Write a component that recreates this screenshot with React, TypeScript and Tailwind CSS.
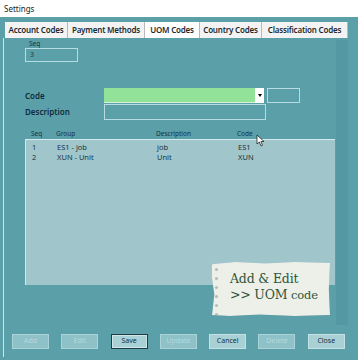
const tabs = [
  { label: 'Account Codes', w: 'w-[63px]' },
  { label: 'Payment Methods', w: 'w-[77px]' },
  { label: 'UOM Codes', w: 'w-[55px]' },
  { label: 'Country Codes', w: 'w-[62px]' },
  { label: 'Classification Codes', w: 'w-[86px]' },
];

const rows = [
  { seq: '1', group: 'ES1 - job', desc: 'job', code: 'ES1' },
  { seq: '2', group: 'XUN - Unit', desc: 'Unit', code: 'XUN' },
];

const buttons = [
  { label: 'Add', enabled: false },
  { label: 'Edit', enabled: false },
  { label: 'Save', enabled: true, active: true },
  { label: 'Update', enabled: false },
  { label: 'Cancel', enabled: true },
  { label: 'Delete', enabled: false },
  { label: 'Close', enabled: true },
];

function Btn({ label, enabled, active }: { label: string; enabled: boolean; active?: boolean }) {
  const base = 'w-[37px] h-[15px] flex items-center justify-center text-[7px]';
  if (!enabled) {
    return <div className={`${base} bg-[#8fc1c8] border border-[#a9d3d8] text-[#b5d9dd]`}>{label}</div>;
  }
  return (
    <div
      className={`${base} bg-[#a9d0d5] text-[#14323f] ${active ? 'border border-[#1f3d48] shadow-[inset_0_0_0_1px_#cfe6e9]' : 'border border-[#c4e2e6]'}`}
    >
      {label}
    </div>
  );
}

function Note() {
  return (
    <div className="absolute left-[212px] top-[262px] w-[118px] h-[54px] bg-[#edefe9] shadow-[0_1px_2px_rgba(0,0,0,0.25)] [clip-path:polygon(0_4%,20%_0,45%_3%,70%_0,100%_2%,99%_50%,100%_98%,70%_100%,40%_97%,15%_100%,0_98%,2%_60%,0_30%)]">
      <div className="absolute left-[3px] top-[6px] flex flex-col gap-[6px]">
        {[0, 1, 2, 3, 4, 5].map((i) => (
          <div key={i} className="w-[3px] h-[3px] rounded-full bg-[#b8bcb4]" />
        ))}
      </div>
      <div className="pl-[18px] pt-[9px] text-[#2f5638] leading-[16px] text-[12.5px] font-['DejaVu_Serif',serif] tracking-[-0.2px] whitespace-nowrap">
        <div>Add &amp; Edit</div>
        <div>&gt;&gt; UOM <span className="text-[11.5px]">code</span></div>
      </div>
    </div>
  );
}

export default function App() {
  return (
    <div className="relative w-[358px] h-[360px] bg-[#5b9fa8] font-['Noto_Sans',sans-serif] overflow-hidden">
      <div className="h-[17px] bg-white text-[8px] text-[#222] pl-[4px] flex items-center">Settings</div>

      <div className="flex pl-[5px] pt-[5px]">
        {tabs.map((t) => (
          <div
            key={t.label}
            className={`${t.w} h-[16px] flex items-center justify-center whitespace-nowrap overflow-hidden text-[8px] font-semibold tracking-[-0.2px] text-[#1e2a30] border-r border-[#b9b9b9] ${t.label === 'UOM Codes' ? 'bg-white' : 'bg-[#f3f3f3]'}`}
          >
            {t.label}
          </div>
        ))}
      </div>

      <div className="absolute left-[336px] top-[40px] w-[12px] h-[285px] bg-[#5398a2]" />

      <div className="relative ml-[3px] mr-[5px] h-[319px] border-l border-[#cbe9ec] pl-[21px] flex flex-col">
        <div className="pl-[4px] pt-[2px] text-[6.5px] text-[#143545] leading-[8px]">Seq</div>
        <div className="w-[53px] h-[14px] border border-[#b7dde2] text-[7px] text-[#1a3a48] pl-[4px] flex items-center">3</div>

        <div className="mt-[26px] flex items-center h-[15px]">
          <div className="w-[79px] text-[8px] font-semibold text-[#0f2c3d]">Code</div>
          <div className="w-[151px] h-[15px] bg-[#93e29a] border-b border-[#d6f3d8]" />
          <div className="w-[9px] h-[15px] bg-white flex items-center justify-center">
            <div className="w-0 h-0 border-l-[2px] border-r-[2px] border-t-[3px] border-l-transparent border-r-transparent border-t-black" />
          </div>
          <div className="ml-[3px] w-[33px] h-[15px] border border-[#b7dde2]" />
        </div>

        <div className="mt-[1px] flex items-center h-[16px]">
          <div className="w-[79px] text-[8px] font-semibold text-[#0f2c3d]">Description</div>
          <div className="w-[162px] h-[16px] border border-[#b7dde2]" />
        </div>

        <div className="mt-[9px] flex text-[6.5px] text-[#143545] leading-[9px] pl-[6px]">
          <div className="w-[25px]">Seq</div>
          <div className="w-[100px]">Group</div>
          <div className="w-[81px]">Description</div>
          <div>Code</div>
        </div>

        <div className="mt-[1px] w-[310px] h-[146px] bg-[#a0c6cc] border-t border-l border-[#d2eaed] pt-[2px]">
          {rows.map((r) => (
            <div key={r.seq} className="flex text-[7.5px] text-[#1a3340] leading-[10px] pl-[6px]">
              <div className="w-[25px]">{r.seq}</div>
              <div className="w-[100px]">{r.group}</div>
              <div className="w-[81px]">{r.desc}</div>
              <div>{r.code}</div>
            </div>
          ))}
        </div>

        <div className="mt-auto mb-[8px] -ml-[13px] flex gap-[12.3px]">
          {buttons.map((b) => (
            <Btn key={b.label} {...b} />
          ))}
        </div>
      </div>

      <Note />

      <svg className="absolute left-[256px] top-[134px]" width="9" height="13" viewBox="0 0 9 13">
        <path d="M1 1 L1 10 L3.3 8 L5 12 L6.5 11.3 L4.9 7.5 L8 7.5 Z" fill="#fff" stroke="#222" strokeWidth="0.8" />
      </svg>
    </div>
  );
}
